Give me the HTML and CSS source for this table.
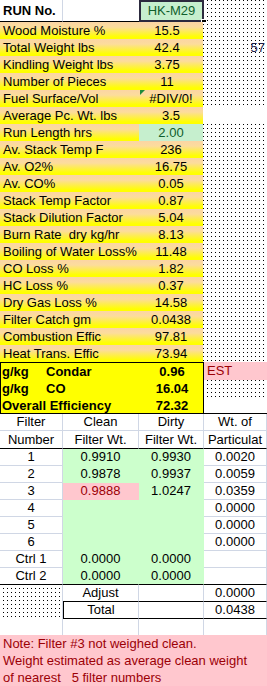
FILE: index.html
```html
<!DOCTYPE html>
<html>
<head>
<meta charset="utf-8">
<link rel="stylesheet" href="styles.css">
</head>
<body>
<div class="sheet">
  <div class="run-row">
    <div class="run-label">RUN No.</div>
    <div class="run-blank"></div>
    <div class="run-value">HK-M29<span class="handle"></span></div>
    <div class="dots"></div>
  </div>

  <div class="data">
    <div class="row"><div class="lab">Wood Moisture %</div><div class="val l4">15.5</div><div class="side dots"></div></div>
    <div class="row"><div class="lab">Total Weight lbs</div><div class="val l4">42.4</div><div class="side dots"><span class="stray">57</span></div></div>
    <div class="row"><div class="lab">Kindling Weight lbs</div><div class="val l4">3.75</div><div class="side dots"></div></div>
    <div class="row"><div class="lab">Number of Pieces</div><div class="val l4">11</div><div class="side dots"></div></div>
    <div class="row"><div class="lab">Fuel Surface/Vol</div><div class="val err">#DIV/0!<span class="tri"></span></div><div class="side dots"></div></div>
    <div class="row"><div class="lab">Average Pc. Wt. lbs</div><div class="val">3.5</div><div class="side"></div></div>
    <div class="row"><div class="lab">Run Length hrs</div><div class="val input">2.00</div><div class="side dots"></div></div>
    <div class="row"><div class="lab">Av. Stack Temp F</div><div class="val">236</div><div class="side dots"></div></div>
    <div class="row"><div class="lab">Av. O2%</div><div class="val">16.75</div><div class="side dots"></div></div>
    <div class="row"><div class="lab">Av. CO%</div><div class="val">0.05</div><div class="side dots"></div></div>
    <div class="row"><div class="lab">Stack Temp Factor</div><div class="val">0.87</div><div class="side dots"></div></div>
    <div class="row"><div class="lab">Stack Dilution Factor</div><div class="val">5.04</div><div class="side dots"></div></div>
    <div class="row"><div class="lab">Burn Rate  dry kg/hr</div><div class="val">8.13</div><div class="side dots"></div></div>
    <div class="row"><div class="lab">Boiling of Water Loss%</div><div class="val">11.48</div><div class="side dots"></div></div>
    <div class="row"><div class="lab">CO Loss %</div><div class="val">1.82</div><div class="side dots"></div></div>
    <div class="row"><div class="lab">HC Loss %</div><div class="val">0.37</div><div class="side dots"></div></div>
    <div class="row"><div class="lab">Dry Gas Loss %</div><div class="val">14.58</div><div class="side dots"></div></div>
    <div class="row"><div class="lab">Filter Catch gm</div><div class="val">0.0438</div><div class="side dots"></div></div>
    <div class="row"><div class="lab">Combustion Effic</div><div class="val">97.81</div><div class="side dots"></div></div>
    <div class="row"><div class="lab">Heat Trans. Effic</div><div class="val">73.94</div><div class="side dots"></div></div>
  </div>

  <div class="summary">
    <div class="box">
      <div class="srow"><span>g/kg</span><span>Condar</span><span class="sval">0.96</span></div>
      <div class="srow"><span>g/kg</span><span>CO</span><span class="sval">16.04</span></div>
      <div class="srow wide"><span>Overall Efficiency</span><span class="sval">72.32</span></div>
    </div>
    <div class="side-col">
      <div class="est">EST</div>
      <div class="dots"></div>
      <div class="plain"></div>
    </div>
  </div>

  <div class="ftable">
    <div class="frow hdr1"><div>Filter</div><div>Clean</div><div>Dirty</div><div>Wt. of</div></div>
    <div class="frow hdr2"><div>Number</div><div>Filter Wt.</div><div>Filter Wt.</div><div>Particulat</div></div>
    <div class="frow"><div>1</div><div class="g">0.9910</div><div class="g">0.9930</div><div>0.0020</div></div>
    <div class="frow"><div>2</div><div class="g">0.9878</div><div class="g">0.9937</div><div>0.0059</div></div>
    <div class="frow"><div>3</div><div class="bad">0.9888</div><div class="g">1.0247</div><div>0.0359</div></div>
    <div class="frow"><div>4</div><div class="g"></div><div class="g"></div><div>0.0000</div></div>
    <div class="frow"><div>5</div><div class="g"></div><div class="g"></div><div>0.0000</div></div>
    <div class="frow"><div>6</div><div class="g"></div><div class="g"></div><div>0.0000</div></div>
    <div class="frow"><div>Ctrl 1</div><div class="g">0.0000</div><div class="g">0.0000</div><div></div></div>
    <div class="frow last"><div>Ctrl 2</div><div class="g">0.0000</div><div class="g">0.0000</div><div></div></div>
  </div>

  <div class="totals">
    <div class="tdots dots"></div>
    <div class="adj">Adjust</div><div class="adj"></div><div class="adj">0.0000</div>
    <div class="tot first">Total</div><div class="tot"></div><div class="tot">0.0438</div>
  </div>

  <div class="erow"><div></div><div></div><div></div><div></div></div>

  <div class="note">
    <div class="nline">Note: Filter #3 not weighed clean.</div>
    <div class="nline">Weight estimated as average clean weight</div>
    <div class="nline">of nearest   5 filter numbers</div>
  </div>
</div>
</body>
</html>
```

FILE: styles.css
```css
* {
  box-sizing: border-box;
  margin: 0;
  padding: 0;
}

html, body {
  background: #ffffff;
}

body {
  margin: 0;
  width: 267px;
  height: 686px;
  overflow: hidden;
  font-family: "Liberation Sans", Arial, sans-serif;
  font-size: 13px;
  color: #000000;
}

.sheet {
  width: 267px;
}

.dots {
  background-color: #ffffff;
  background-image: conic-gradient(from 270deg at 1px 1px, #000000 90deg, transparent 0);
  background-size: 4px 4px;
  background-position: 3px 0;
  background-attachment: fixed;
}

/* RUN row */
.run-row {
  display: grid;
  grid-template-columns: 63px 76px 65px 63px;
  height: 22px;
}

.run-label {
  font-weight: bold;
  padding-left: 3px;
  line-height: 21px;
  border-right: 1px solid #d0d7e5;
  border-bottom: 1px solid #000000;
}

.run-blank {
  border-bottom: 1px solid #000000;
}

.run-value {
  position: relative;
  height: 22px;
  background: #c6efce;
  border: 2px solid #2c2a3e;
  color: #0f5e2c;
  text-align: center;
  line-height: 17px;
}

.handle {
  position: absolute;
  right: -5px;
  bottom: -5px;
  width: 6px;
  height: 6px;
  background: #000000;
  border: 1px solid #ffffff;
}

/* data rows */
.row {
  display: grid;
  grid-template-columns: 139px 64px 64px;
  height: 17px;
  line-height: 17px;
}

.lab,
.val {
  background: linear-gradient(to bottom, #fbd5a4 0%, #fcdc9c 30%, #ffff00 88%);
}

.lab {
  padding-left: 3px;
  white-space: pre;
}

.val {
  position: relative;
  text-align: center;
  white-space: nowrap;
}

.val.l4 {
  padding-right: 8px;
}

.val.input {
  background: #c6efce;
  color: #0f5e2c;
}

.tri {
  position: absolute;
  left: 1px;
  top: 0;
  width: 0;
  height: 0;
  border-top: 5px solid #1f8a3a;
  border-right: 5px solid transparent;
}

.side {
  position: relative;
}

.stray {
  position: absolute;
  right: 2px;
  top: 0;
  color: #1c1c48;
}

/* summary box */
.summary {
  display: grid;
  grid-template-columns: 204px 63px;
  border-bottom: 1px solid #000000;
}

.box {
  border: 1px solid #000000;
  border-bottom: none;
  background: #ffff00;
  font-weight: bold;
}

.srow {
  display: grid;
  grid-template-columns: 44px 94px 64px;
  height: 17px;
  line-height: 17px;
  padding-left: 1px;
}

.srow.wide {
  grid-template-columns: 138px 64px;
  height: 16px;
}

.sval {
  text-align: center;
}

.side-col {
  display: grid;
  grid-template-rows: 18px 17px 16px;
}

.est {
  background: #ffc7ce;
  color: #9c0006;
  padding-left: 3px;
  line-height: 18px;
}

.plain {
  background: #ffffff;
}

/* filter table */
.frow {
  display: grid;
  grid-template-columns: 63px 76px 65px 63px;
  height: 17px;
}

.frow > div {
  text-align: center;
  line-height: 16px;
  border-right: 1px solid #d0d7e5;
  border-bottom: 1px solid #d0d7e5;
  white-space: nowrap;
  overflow: hidden;
}

.frow.hdr2 {
  height: 18px;
}

.frow.hdr2 > div {
  line-height: 17px;
  border-bottom-color: #000000;
}

.frow > div.g {
  background: #ccffcc;
  border-color: transparent;
}

.frow > div.bad {
  background: #ffc7ce;
  color: #9c0006;
  border-color: transparent;
}

.frow.last > div {
  border-bottom-color: #000000;
}

/* adjust / total */
.totals {
  display: grid;
  grid-template-columns: 63px 76px 65px 63px;
  grid-template-rows: 16px 18px;
}

.tdots {
  grid-row: 1 / span 2;
  border-right: 1px solid #d0d7e5;
}

.adj {
  text-align: center;
  line-height: 16px;
  border-right: 1px solid #d0d7e5;
}

.tot {
  text-align: center;
  line-height: 16px;
  border-top: 1px solid #000000;
  border-bottom: 1px solid #000000;
  border-right: 1px solid #d0d7e5;
}

.tot.first {
  border-left: 1px solid #000000;
}

.erow {
  display: grid;
  grid-template-columns: 63px 76px 65px 63px;
  height: 16px;
}

.erow > div {
  border-right: 1px solid #d0d7e5;
}

.note {
  height: 52px;
  background: #ffc7ce;
  color: #9c0006;
  padding-left: 3px;
}

.nline {
  height: 17px;
  line-height: 17px;
  white-space: pre;
}
```
